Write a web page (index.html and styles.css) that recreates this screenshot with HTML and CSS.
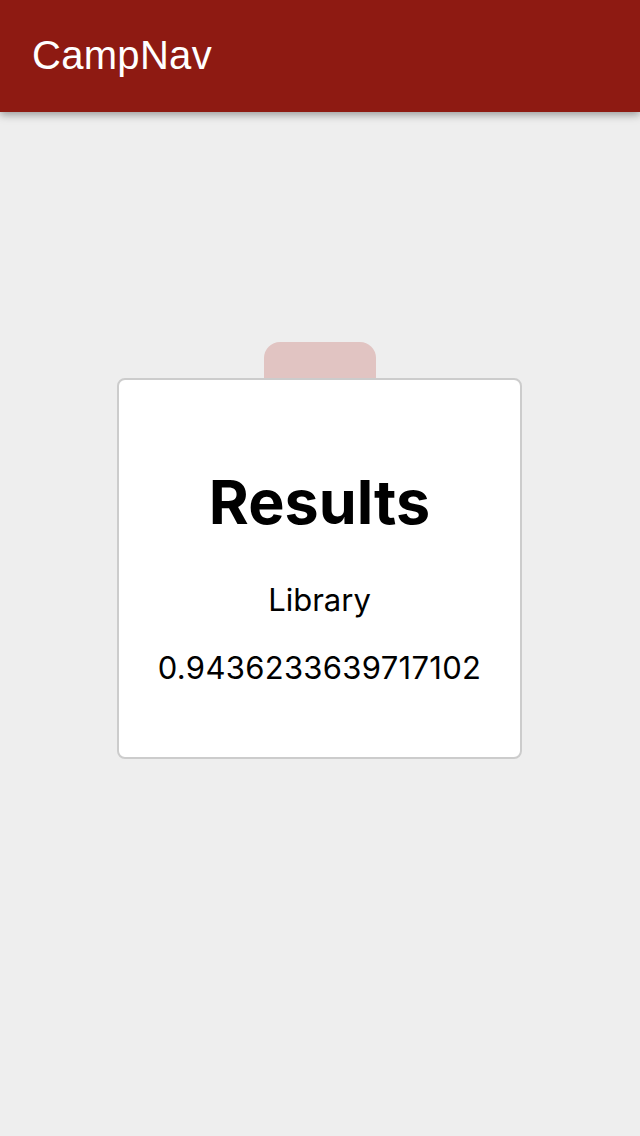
FILE: index.html
```html
<!DOCTYPE html>
<html>
<head>
<meta charset="utf-8">
<link rel="stylesheet" href="styles.css">
</head>
<body>
<header class="appbar"><span class="title">CampNav</span></header>
<main class="content">
  <div class="tab"></div>
  <section class="card">
    <h1 class="heading">Results</h1>
    <p class="place">Library</p>
    <p class="score">0.9436233639717102</p>
  </section>
</main>
</body>
</html>
```
FILE: styles.css
```css
html, body { margin: 0; padding: 0; }
body {
  width: 640px;
  height: 1136px;
  background: #eeeeee;
  font-family: Inter, "Liberation Sans", sans-serif;
  overflow: hidden;
}
.appbar {
  height: 112px;
  background: #8e1a12;
  box-shadow: 0 3px 8px rgba(0,0,0,0.35);
  display: flex;
  align-items: center;
  padding-left: 32px;
  position: relative;
  z-index: 1;
}
.title {
  font-family: "Liberation Sans", Arial, sans-serif;
  color: #ffffff;
  font-size: 40px;
  line-height: 1;
  margin-top: -3px;
  letter-spacing: 0.3px;
}
.content {
  display: flex;
  flex-direction: column;
  align-items: center;
  padding-top: 230px;
}
.tab {
  width: 112px;
  height: 38px;
  background: #e1c4c2;
  border-radius: 16px 16px 0 0;
  margin-bottom: -2px;
}
.card {
  box-sizing: border-box;
  width: 405px;
  height: 381px;
  background: #ffffff;
  border: 2px solid #cccccc;
  border-radius: 8px;
  display: flex;
  flex-direction: column;
  align-items: center;
  position: relative;
  margin-left: -1px;
}
.heading {
  margin: 86px 0 0;
  font-size: 61px;
  font-weight: 700;
  line-height: 72px;
  color: #000;
}
.place {
  margin: 42px 0 0;
  font-size: 31px;
  line-height: 40px;
  color: #000;
}
.score {
  margin: 28px 0 0;
  font-size: 31px;
  letter-spacing: 0.3px;
  line-height: 40px;
  color: #000;
}
```
